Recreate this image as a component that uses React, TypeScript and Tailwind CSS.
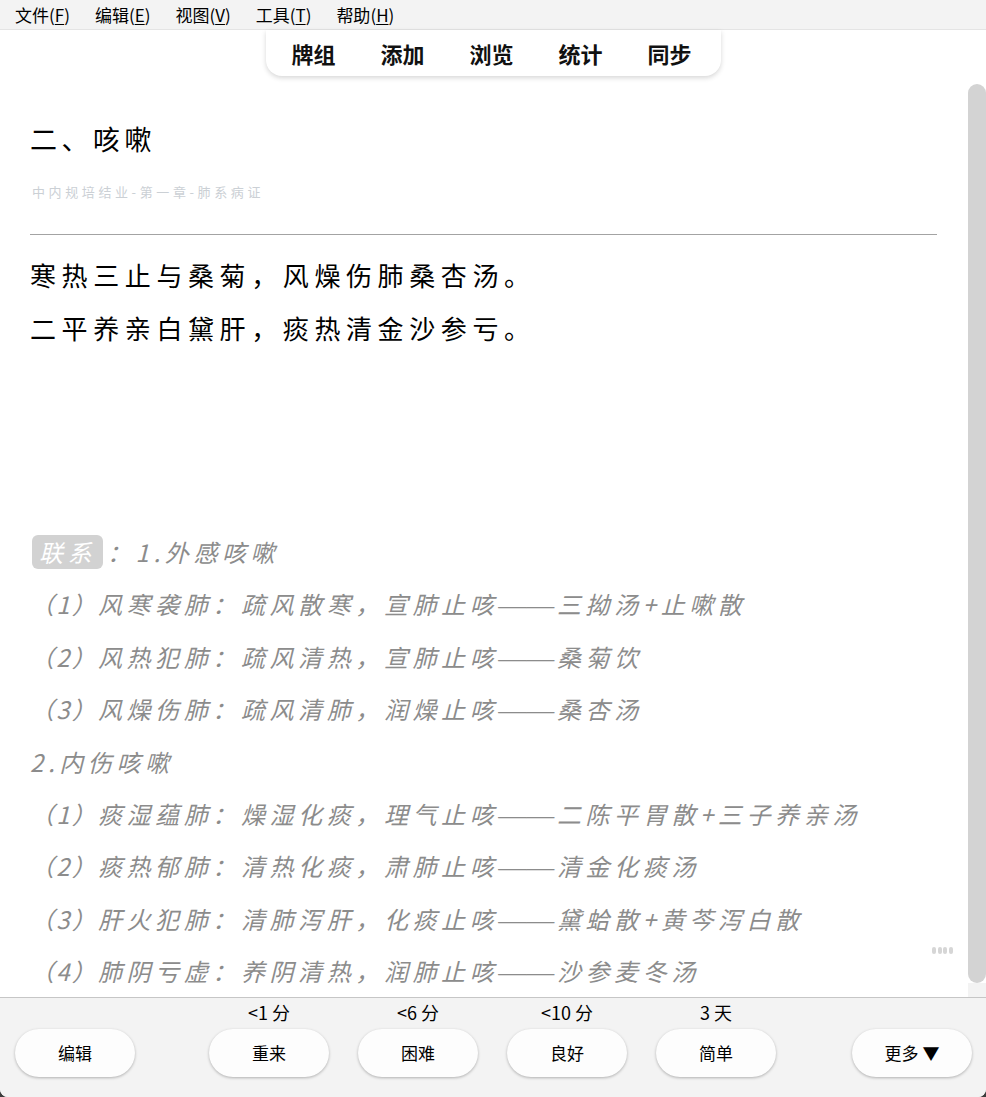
const UI = '"Noto Sans CJK SC", "Noto Sans", sans-serif';
const CARD = '"Noto Sans CJK SC", "Liberation Serif", serif';
const DASH = '"Liberation Serif", serif';

const menus = [
  { label: "文件", key: "F" },
  { label: "编辑", key: "E" },
  { label: "视图", key: "V" },
  { label: "工具", key: "T" },
  { label: "帮助", key: "H" },
];

const tabs = ["牌组", "添加", "浏览", "统计", "同步"];

const related = [
  "（1）风寒袭肺：疏风散寒，宣肺止咳——三拗汤+止嗽散",
  "（2）风热犯肺：疏风清热，宣肺止咳——桑菊饮",
  "（3）风燥伤肺：疏风清肺，润燥止咳——桑杏汤",
  "2.内伤咳嗽",
  "（1）痰湿蕴肺：燥湿化痰，理气止咳——二陈平胃散+三子养亲汤",
  "（2）痰热郁肺：清热化痰，肃肺止咳——清金化痰汤",
  "（3）肝火犯肺：清肺泻肝，化痰止咳——黛蛤散+黄芩泻白散",
  "（4）肺阴亏虚：养阴清热，润肺止咳——沙参麦冬汤",
];

const answers = [
  { due: "<1 分", label: "重来" },
  { due: "<6 分", label: "困难" },
  { due: "<10 分", label: "良好" },
  { due: "3 天", label: "简单" },
];

// the card font draws the dash pair as one long rule and the "(n)" tighter than Noto does
function RelatedLine({ text }: { text: string }) {
  const parts = text.split(/(——|（\d）)/).filter(Boolean);
  return (
    <div className="whitespace-nowrap">
      {parts.map((p, i) =>
        p === "——" ? (
          <span
            key={i}
            className="text-[28px] leading-[0] tracking-[0px] not-italic mr-[2.6px]"
            style={{ fontFamily: DASH }}
          >
            {p}
          </span>
        ) : p.startsWith("（") ? (
          <span key={i} className="tracking-[2.2px]">
            {p}
          </span>
        ) : (
          <span key={i}>{p}</span>
        )
      )}
    </div>
  );
}

function PillButton({ children }: { children: React.ReactNode }) {
  return (
    <button
      type="button"
      className="w-[120px] h-[48px] rounded-full bg-[#fdfdfd] text-[17px] text-black shadow-[0_1px_3px_rgba(0,0,0,0.28)]"
    >
      {children}
    </button>
  );
}

export default function App() {
  return (
    <div className="w-[986px] h-[1097px] bg-[#3c3c3c]" style={{ fontFamily: UI }}>
      <div className="w-full h-full flex flex-col bg-white rounded-b-[8px] overflow-hidden">
        {/* menu bar */}
        <div className="h-[30px] flex items-center bg-[#f3f3f3] border-b border-[#e4e4e4] pl-[15px] gap-[25px] text-[17px] text-black">
          {menus.map((m) => (
            <span key={m.key}>
              {m.label}(<span className="underline underline-offset-2">{m.key}</span>)
            </span>
          ))}
        </div>

        {/* toolbar */}
        <div className="h-[54px] flex justify-center">
          <div className="w-[455px] h-[46px] pr-[3px] flex items-center justify-center gap-[45px] bg-white rounded-b-[16px] shadow-[0_2px_5px_rgba(0,0,0,0.16)]">
            {tabs.map((t) => (
              <span key={t} className="text-[22px] font-bold text-[#111]">
                {t}
              </span>
            ))}
          </div>
        </div>

        {/* card */}
        <div className="h-[913px] flex relative">
          <div className="flex-1 pl-[30px] pr-[31px] pt-[37px] overflow-hidden" style={{ fontFamily: CARD }}>
            <div className="text-[27px] leading-[36px] tracking-[4.5px] text-black">二、咳嗽</div>
            <div className="mt-[25px] text-[13px] leading-[20px] tracking-[3.6px] text-[#cbd0d5] pl-[2px]">
              中内规培结业-第一章-肺系病证
            </div>
            <div className="mt-[32px] h-px bg-[#a3a3a3]" />
            <div className="mt-[13px] text-[26px] leading-[53px] tracking-[5.6px] text-black">
              <div>寒热三止与桑菊，风燥伤肺桑杏汤。</div>
              <div>二平养亲白黛肝，痰热清金沙参亏。</div>
            </div>
            <div className="mt-[172px] text-[24px] leading-[52.4px] tracking-[4.6px] text-[#8c8c8c] italic">
              <div className="flex items-center">
                <span className="inline-flex items-center justify-center w-[71px] h-[34px] rounded-[6px] bg-[#d2d2d2] text-white ml-[2px] mr-[4px]">
                  联系
                </span>
                <span>：1.外感咳嗽</span>
              </div>
              {related.map((r) => (
                <RelatedLine key={r} text={r} />
              ))}
            </div>
          </div>

          {/* little drag marks */}
          <div className="absolute left-[932px] top-[863px] flex gap-[1.5px]">
            <span className="w-[4px] h-[7px] rounded-full bg-[#d6d6d6]" />
            <span className="w-[4px] h-[7px] rounded-full bg-[#d6d6d6]" />
            <span className="w-[4px] h-[7px] rounded-full bg-[#d6d6d6]" />
            <span className="w-[4px] h-[7px] rounded-full bg-[#d6d6d6]" />
          </div>

          {/* scrollbar */}
          <div className="w-[18px] flex flex-col">
            <div className="h-[899px] rounded-full bg-[#d3d3d3]" />
            <div className="flex-1 bg-[#f3f3f3]" />
          </div>
        </div>

        {/* answer bar */}
        <div className="flex-1 flex items-end bg-[#f3f3f3] border-t border-[#c6c6c6] pl-[15px] pr-[14px] pb-[20px]">
          <PillButton>编辑</PillButton>
          <div className="ml-[74px] flex gap-[29px]">
            {answers.map((a) => (
              <div key={a.label} className="flex flex-col items-center">
                <span className="text-[18px] leading-[22px] text-black mb-[6px]">{a.due}</span>
                <PillButton>{a.label}</PillButton>
              </div>
            ))}
          </div>
          <div className="flex-1" />
          <PillButton>
            更多<span className="ml-[4px]">▼</span>
          </PillButton>
        </div>
      </div>
    </div>
  );
}
